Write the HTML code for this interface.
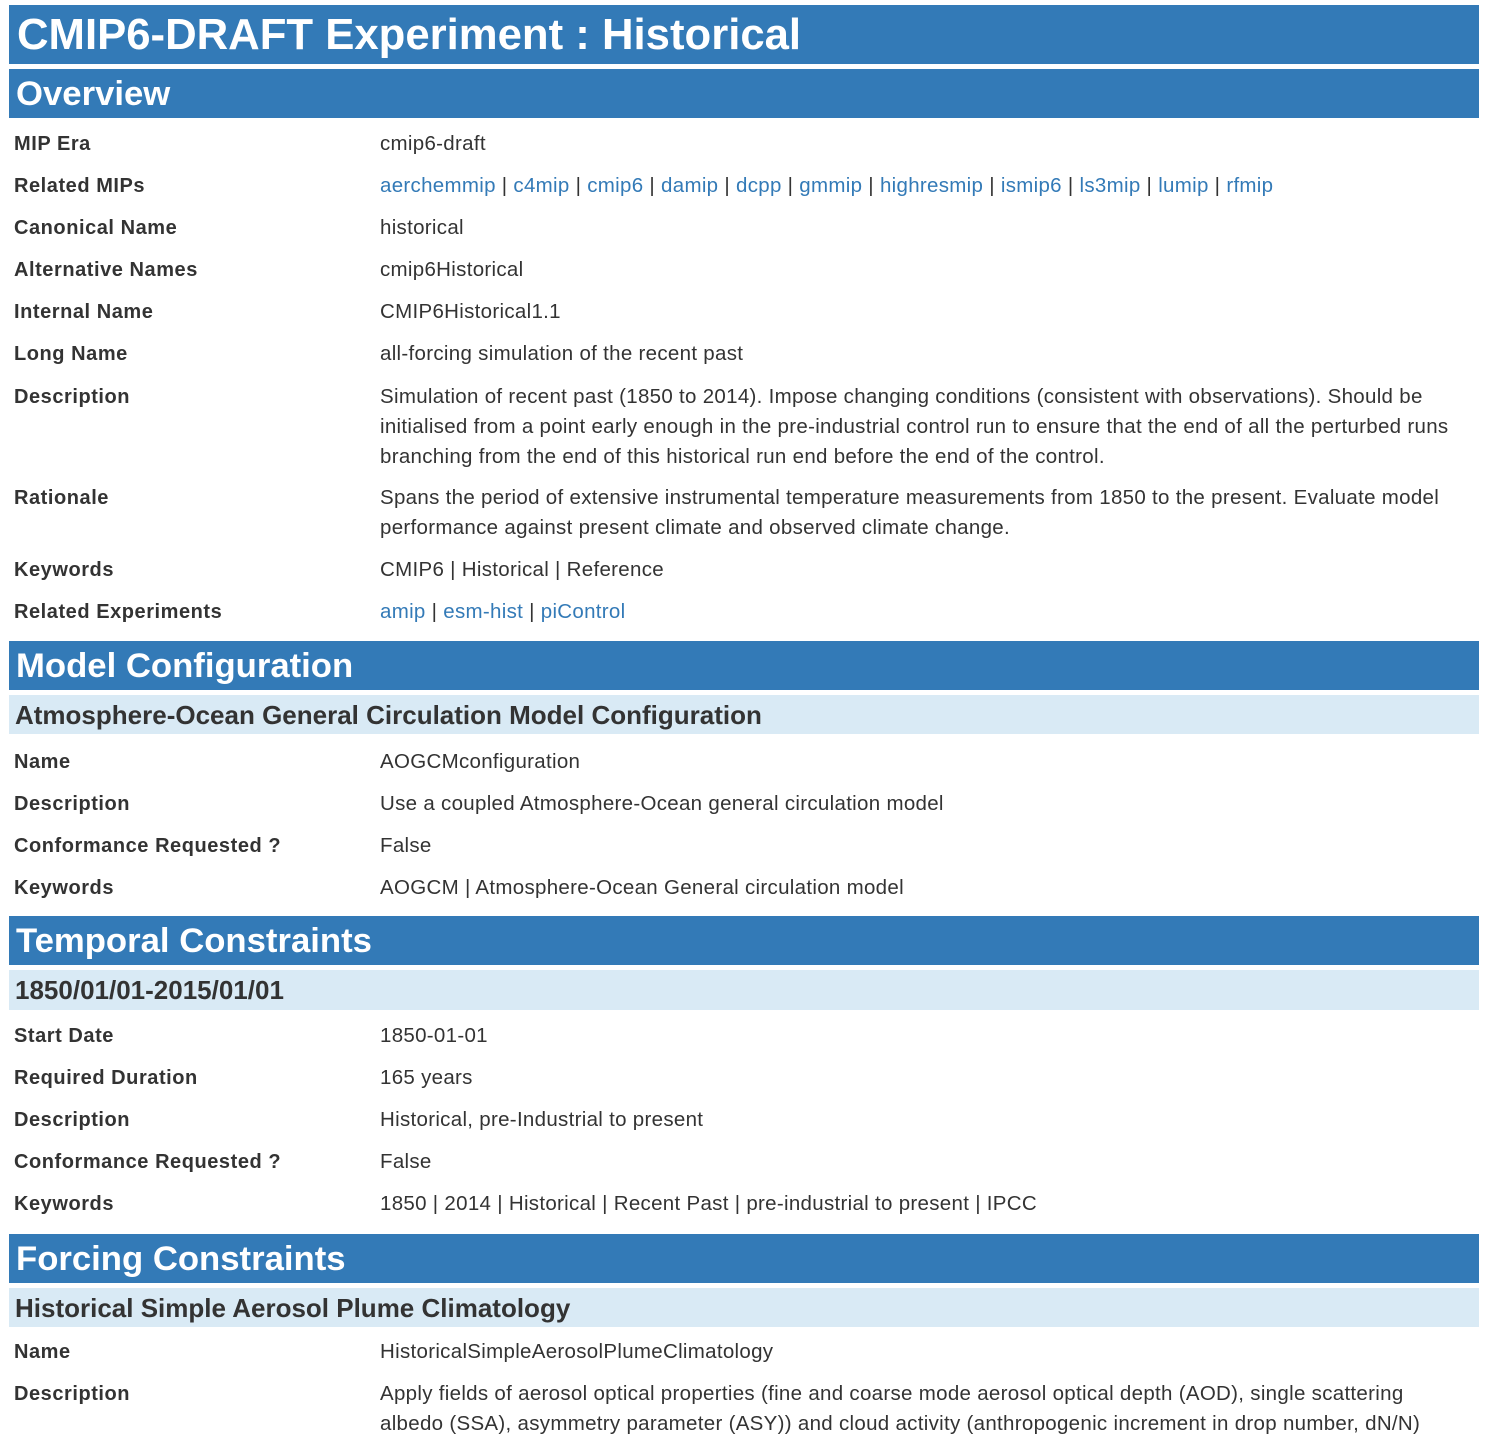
<!DOCTYPE html>
<html><head><meta charset="utf-8"><style>
body{margin:0;width:1492px;height:1423px;overflow:hidden;background:#fff;font-family:"Liberation Sans",Arial,sans-serif;color:#333;position:relative}
.bar{position:absolute;left:9px;width:1470px;background:#337ab7;color:#fff;font-weight:bold;box-sizing:border-box;padding-left:8px}
.t{top:5px;height:59px;line-height:59px;font-size:43.7px}
.s{height:49px;line-height:50px;font-size:34.7px;padding-left:7px}
.sub{position:absolute;left:9px;width:1470px;background:#d9eaf5;color:#333;font-size:26px;font-weight:bold;height:39px;line-height:40px;padding-left:6px;box-sizing:border-box}
.l,.v{position:absolute;line-height:30px;margin-top:1px}
.l{left:14px;font-weight:bold;font-size:20px;letter-spacing:0.55px}
.v{left:380px;width:1090px;font-size:20.5px;letter-spacing:0.3px}
a{color:#337ab7;text-decoration:none}
</style></head><body>
<div class="bar t">CMIP6-DRAFT Experiment : Historical</div>
<div class="bar s" style="top:69px">Overview</div>
<div class="l" style="top:128px">MIP Era</div><div class="v" style="top:128px">cmip6-draft</div>
<div class="l" style="top:170px">Related MIPs</div><div class="v" style="top:170px"><a>aerchemmip</a> | <a>c4mip</a> | <a>cmip6</a> | <a>damip</a> | <a>dcpp</a> | <a>gmmip</a> | <a>highresmip</a> | <a>ismip6</a> | <a>ls3mip</a> | <a>lumip</a> | <a>rfmip</a></div>
<div class="l" style="top:212px">Canonical Name</div><div class="v" style="top:212px">historical</div>
<div class="l" style="top:254px">Alternative Names</div><div class="v" style="top:254px">cmip6Historical</div>
<div class="l" style="top:296px">Internal Name</div><div class="v" style="top:296px">CMIP6Historical1.1</div>
<div class="l" style="top:338px">Long Name</div><div class="v" style="top:338px">all-forcing simulation of the recent past</div>
<div class="l" style="top:381px">Description</div><div class="v" style="top:381px">Simulation of recent past (1850 to 2014). Impose changing conditions (consistent with observations). Should be initialised from a point early enough in the pre-industrial control run to ensure that the end of all the perturbed runs branching from the end of this historical run end before the end of the control.</div>
<div class="l" style="top:482px">Rationale</div><div class="v" style="top:482px">Spans the period of extensive instrumental temperature measurements from 1850 to the present. Evaluate model performance against present climate and observed climate change.</div>
<div class="l" style="top:554px">Keywords</div><div class="v" style="top:554px">CMIP6 | Historical | Reference</div>
<div class="l" style="top:596px">Related Experiments</div><div class="v" style="top:596px"><a>amip</a> | <a>esm-hist</a> | <a>piControl</a></div>

<div class="bar s" style="top:641px">Model Configuration</div>
<div class="sub" style="top:695px">Atmosphere-Ocean General Circulation Model Configuration</div>
<div class="l" style="top:746px">Name</div><div class="v" style="top:746px">AOGCMconfiguration</div>
<div class="l" style="top:788px">Description</div><div class="v" style="top:788px">Use a coupled Atmosphere-Ocean general circulation model</div>
<div class="l" style="top:830px">Conformance Requested ?</div><div class="v" style="top:830px">False</div>
<div class="l" style="top:872px">Keywords</div><div class="v" style="top:872px">AOGCM | Atmosphere-Ocean General circulation model</div>

<div class="bar s" style="top:916px">Temporal Constraints</div>
<div class="sub" style="top:970px;height:40px">1850/01/01-2015/01/01</div>
<div class="l" style="top:1020px">Start Date</div><div class="v" style="top:1020px">1850-01-01</div>
<div class="l" style="top:1062px">Required Duration</div><div class="v" style="top:1062px">165 years</div>
<div class="l" style="top:1104px">Description</div><div class="v" style="top:1104px">Historical, pre-Industrial to present</div>
<div class="l" style="top:1146px">Conformance Requested ?</div><div class="v" style="top:1146px">False</div>
<div class="l" style="top:1188px">Keywords</div><div class="v" style="top:1188px">1850 | 2014 | Historical | Recent Past | pre-industrial to present | IPCC</div>

<div class="bar s" style="top:1234px">Forcing Constraints</div>
<div class="sub" style="top:1288px">Historical Simple Aerosol Plume Climatology</div>
<div class="l" style="top:1336px">Name</div><div class="v" style="top:1336px">HistoricalSimpleAerosolPlumeClimatology</div>
<div class="l" style="top:1378px">Description</div><div class="v" style="top:1378px">Apply fields of aerosol optical properties (fine and coarse mode aerosol optical depth (AOD), single scattering albedo (SSA), asymmetry parameter (ASY)) and cloud activity (anthropogenic increment in drop number, dN/N)</div>
</body></html>
